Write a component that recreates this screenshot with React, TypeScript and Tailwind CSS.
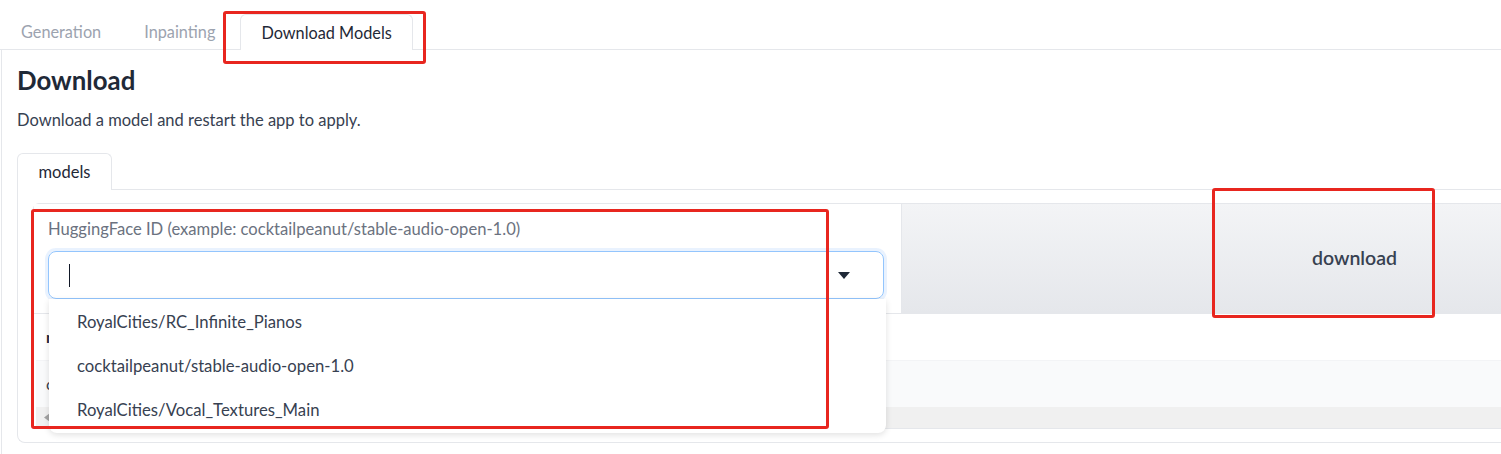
import React from 'react';

const suggestions = [
  'RoyalCities/RC_Infinite_Pianos',
  'cocktailpeanut/stable-audio-open-1.0',
  'RoyalCities/Vocal_Textures_Main',
];

// red highlight frames drawn over the screenshot
function Mark({ className }: { className: string }) {
  return <div className={`pointer-events-none absolute rounded-[3px] border-[3px] border-[#e8261f] ${className}`} />;
}

export default function App() {
  return (
    <div className="relative h-[454px] w-[1501px] overflow-hidden bg-white font-['Lato',sans-serif] text-[#1f2937]">
      {/* Top tabs */}
      <div className="flex h-[50px] items-end border-b border-[#e5e7eb]">
        <button className="h-[35px] pl-[21px] pr-[22px] text-[16.3px] leading-[24px] text-[#9ca3af]">Generation</button>
        <button className="h-[35px] pl-[21px] pr-[25px] text-[16.3px] leading-[24px] text-[#9ca3af]">Inpainting</button>
        <button className="mb-[-1px] h-[36px] rounded-t-[6px] border border-b-0 border-[#e5e7eb] bg-white px-[20px] text-[16.3px] leading-[24px] text-[#1f2937]">
          Download Models
        </button>
      </div>

      {/* Tab panel */}
      <div className="ml-px h-[404px] border-l border-[#e5e7eb] pl-[15px] pt-[14px]">
        <h1 className="text-[25.8px] font-bold leading-[32px] text-[#1f2937]">Download</h1>
        <p className="mt-[12px] text-[16.5px] leading-[24px] text-[#374151]">
          Download a model and restart the app to apply.
        </p>

        {/* Inner tabs */}
        <div className="mt-[21px] flex h-[37px] items-end border-b border-[#e5e7eb]">
          <div className="mb-[-1px] flex h-[37px] w-[95px] items-center justify-center rounded-t-[6px] border border-b-0 border-[#e5e7eb] bg-white text-[16.5px] text-[#1f2937]">
            models
          </div>
        </div>

        <div className="h-[253px] rounded-bl-[8px] border-b border-l border-[#e5e7eb] pl-[15px] pt-[13px]">
          <div className="relative overflow-visible rounded-tl-[6px] border-l border-t border-[#e5e7eb]">
            {/* Form row */}
            <div className="flex h-[110px] border-b border-[#e5e7eb]">
              <div className="w-[867px] shrink-0 bg-white px-[14px] pt-[14px]">
                <div className="text-[16.6px] leading-[22px] text-[#6b7280]">
                  HuggingFace ID (example: cocktailpeanut/stable-audio-open-1.0)
                </div>
                <div className="mt-[11px] flex h-[48px] w-[836px] items-center justify-between rounded-[8px] border border-[#93c5fd] px-[20px] ring-[3px] ring-[#dbeafe]/60">
                  <span className="h-[23px] w-px bg-[#111827]" />
                  <svg width="12" height="7" viewBox="0 0 12 7" className="mr-[13px]">
                    <path d="M0 0h12L6 7z" fill="#1f2937" />
                  </svg>
                </div>
              </div>
              <button className="w-[906px] shrink-0 border-l border-[#e5e7eb] bg-gradient-to-b from-[#f3f4f6] to-[#e5e7eb] pb-[2px] text-[19.5px] font-semibold text-[#374151]">
                download
              </button>
            </div>

            {/* Table behind the dropdown */}
            <div className="ml-[2px] rounded-tl-[6px]">
              <div className="flex h-[47px] items-center border-b border-[#f3f4f6] bg-white pl-[10px] text-[16px] font-bold text-[#1f2937]">
                name
              </div>
              <div className="flex h-[46px] items-center bg-[#f9fafb] pl-[10px] text-[16px] text-[#374151]">
                cocktailpeanut/stable-audio-open-1.0
              </div>
              <div className="flex h-[22px] items-center border-b border-[#e5e7eb] bg-[#f0f0f0] pl-[8px]">
                <svg width="6" height="9" viewBox="0 0 6 9">
                  <path d="M6 0v9L0 4.5z" fill="#a3a3a3" />
                </svg>
              </div>
            </div>

            {/* Dropdown list */}
            <ul className="absolute left-[15px] top-[95px] w-[837px] rounded-b-[8px] bg-white pt-[2px] shadow-[0_2px_6px_rgba(0,0,0,0.12)]">
              {suggestions.map((s) => (
                <li key={s} className="flex h-[44px] items-center pl-[28px] text-[16.7px] text-[#374151]">
                  {s}
                </li>
              ))}
            </ul>
          </div>
        </div>
      </div>

      <Mark className="left-[223px] top-[11px] h-[53px] w-[203px]" />
      <Mark className="left-[31px] top-[209px] h-[220px] w-[798px]" />
      <Mark className="left-[1212px] top-[188px] h-[130px] w-[223px]" />
    </div>
  );
}
